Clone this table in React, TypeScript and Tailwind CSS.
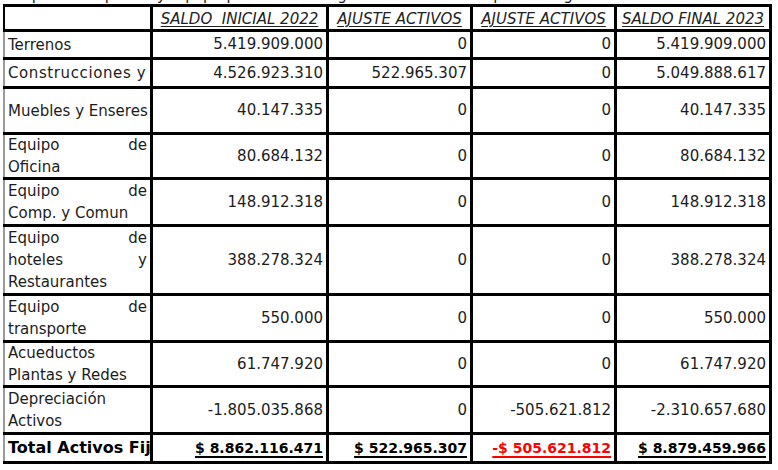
const headers = ["SALDO\u00a0 INICIAL 2022", "AJUSTE ACTIVOS", "AJUSTE ACTIVOS", "SALDO FINAL 2023"];

type Row = {
  lines: string[][];
  nowrap?: string;
  h: string;
  values: string[];
};

const rows: Row[] = [
  { lines: [["Terrenos"]], h: "h-[25px]", values: ["5.419.909.000", "0", "0", "5.419.909.000"] },
  {
    lines: [],
    nowrap: "Construcciones y Edificaciones",
    h: "h-[26px]",
    values: ["4.526.923.310", "522.965.307", "0", "5.049.888.617"],
  },
  { lines: [["Muebles y Enseres"]], h: "h-[43px]", values: ["40.147.335", "0", "0", "40.147.335"] },
  { lines: [["Equipo", "de"], ["Oficina"]], h: "h-[42px]", values: ["80.684.132", "0", "0", "80.684.132"] },
  { lines: [["Equipo", "de"], ["Comp. y Comun"]], h: "h-[44px]", values: ["148.912.318", "0", "0", "148.912.318"] },
  {
    lines: [["Equipo", "de"], ["hoteles", "y"], ["Restaurantes"]],
    h: "h-[66px]",
    values: ["388.278.324", "0", "0", "388.278.324"],
  },
  { lines: [["Equipo", "de"], ["transporte"]], h: "h-[44px]", values: ["550.000", "0", "0", "550.000"] },
  { lines: [["Acueductos"], ["Plantas y Redes"]], h: "h-[42px]", values: ["61.747.920", "0", "0", "61.747.920"] },
  {
    lines: [["Depreciación"], ["Activos"]],
    h: "h-[44px]",
    values: ["-1.805.035.868", "0", "-505.621.812", "-2.310.657.680"],
  },
];

const totals = ["$ 8.862.116.471", "$ 522.965.307", "-$ 505.621.812", "$ 8.879.459.966"];

export default function App() {
  return (
    <div className="w-[778px] h-[470px] overflow-hidden bg-white font-['DejaVu_Sans',sans-serif] text-[15px] text-[#1c1c1c]">
      <p className="-mt-[14px] h-[18px] leading-[18px] pl-[8px] whitespace-nowrap">
        Propiedades planta y equipo presentan el siguiente movimiento para la vigencia 2023:
      </p>

      <div className="ml-[3px] w-[769px] grid grid-cols-[147px_173px_141px_141px_152px] gap-[3px] bg-black border-[3px] border-l-0 border-black">
        {/* header */}
        <div className="h-[22px] bg-white border-l-2 border-black" />
        {headers.map((h, i) => (
          <div
            key={i}
            className="h-[22px] bg-white flex items-end justify-center leading-[20px] whitespace-nowrap italic underline underline-offset-2 text-[#222]"
          >
            {h}
          </div>
        ))}

        {rows.map((r, i) => (
          <>
            <div
              key={`l${i}`}
              className={`${r.h} bg-white border-l-2 border-[#9a9a9a] pl-[3px] pr-[3px] flex flex-col justify-center leading-[22px] overflow-hidden`}
            >
              {r.nowrap ? (
                <span className="whitespace-nowrap tracking-[0.6px]">{r.nowrap}</span>
              ) : (
                r.lines.map((words, j) => (
                  <div key={j} className="flex justify-between whitespace-nowrap">
                    {words.map((w, k) => (
                      <span key={k}>{w}</span>
                    ))}
                  </div>
                ))
              )}
            </div>
            {r.values.map((v, j) => (
              <div key={`v${i}-${j}`} className={`${r.h} bg-white flex items-center justify-end pr-[3px]`}>
                {v}
              </div>
            ))}
          </>
        ))}

        {/* totals */}
        <div className="h-[26px] bg-white border-l-2 border-[#9a9a9a] pl-[3px] flex items-center overflow-hidden whitespace-nowrap font-bold text-[16px] text-black">
          Total Activos Fijos
        </div>
        {totals.map((t, i) => (
          <div
            key={i}
            className={`h-[26px] bg-white flex items-center justify-end pr-[3px] font-bold text-[14px] underline decoration-2 underline-offset-[3px] ${
              i === 2 ? "text-[#ff0000]" : "text-black"
            }`}
          >
            {t}
          </div>
        ))}
      </div>
    </div>
  );
}
